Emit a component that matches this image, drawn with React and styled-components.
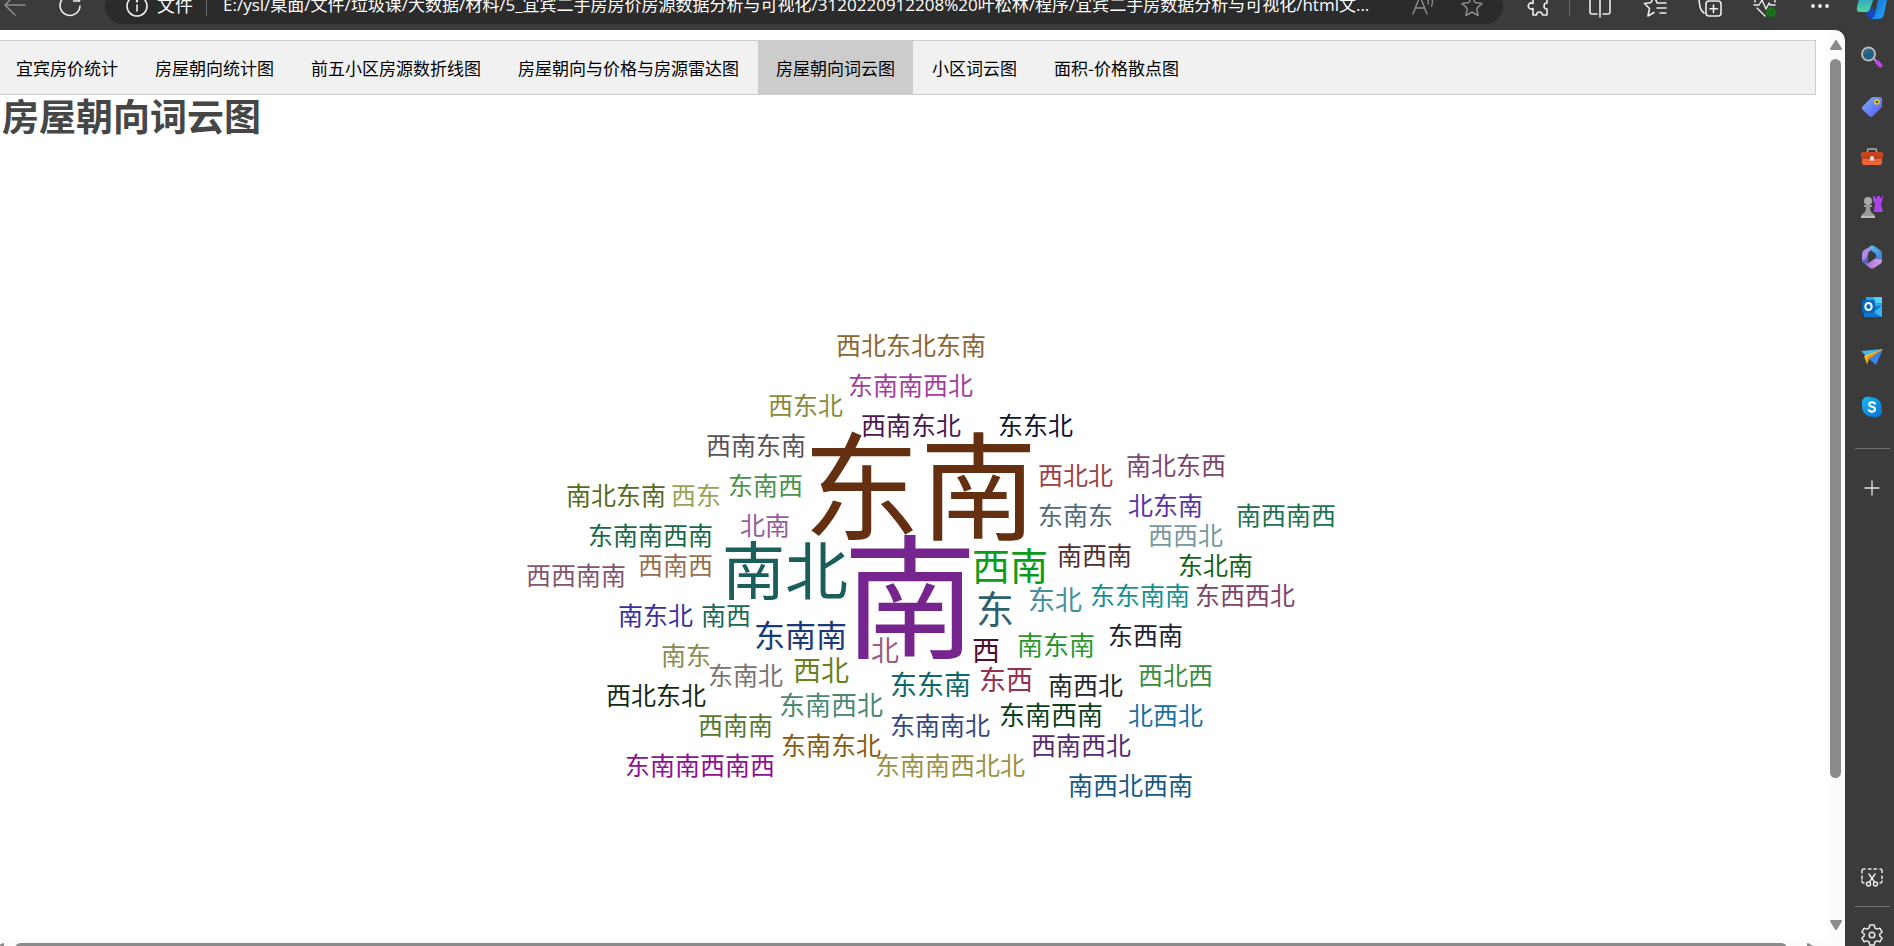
import React from "react";
import styled, { createGlobalStyle, css } from "styled-components";

const sans = '"Open Sans", "Noto Sans CJK SC", sans-serif';
const cjk = '"Noto Sans CJK SC", sans-serif';

const GlobalStyle = createGlobalStyle`
  *, *::before, *::after { box-sizing: border-box; }
  body { margin: 0; overflow: hidden; background: #3b3b3b; font-family: ${cjk}; }
`;

const Shell = styled.div`
  display: grid;
  grid-template-columns: minmax(0, 1fr) 49px;
  height: 100vh;
  overflow: hidden;
`;

const Main = styled.div`
  display: flex;
  flex-direction: column;
  min-width: 0;
  min-height: 0;
`;

const Toolbar = styled.header`
  display: flex;
  align-items: center;
  flex: none;
  height: 48px;
  margin-top: -18px;
  padding-right: 10px;
`;

const ToolGroup = styled.div`
  display: flex;
  align-items: center;
  gap: ${(p) => p.$gap || 25}px;
`;

const IconButton = styled.button`
  display: flex;
  align-items: center;
  justify-content: center;
  flex: none;
  width: 30px;
  height: 30px;
  padding: 0;
  border: 0;
  background: none;
  color: ${(p) => (p.$dim ? "#8c8c8c" : "#ededed")};
`;

const ToolDivider = styled.span`
  width: 1px;
  height: 20px;
  background: #6a6a6a;
`;

const AddressBar = styled.div`
  display: flex;
  align-items: center;
  flex: 1;
  min-width: 0;
  height: 36px;
  margin: 0 21px 0 20px;
  padding: 0 16px 0 17px;
  border-radius: 18px;
  background: #2b2b2b;
  color: #fff;
`;

const Scheme = styled.label`
  flex: none;
  margin: 0 13px 2px 5px;
  font: 18px/30px ${sans};
`;

const Url = styled.input`
  flex: 1;
  min-width: 0;
  height: 30px;
  margin: 0 0 2px 16px;
  padding: 0;
  border: 0;
  outline: 0;
  background: none;
  color: #fff;
  font: 17px/30px ${sans};
`;

const Viewport = styled.div`
  display: grid;
  grid-template-columns: minmax(0, 1fr) 17px;
  grid-template-rows: minmax(0, 1fr) 7px;
  flex: 1;
  min-height: 0;
  overflow: hidden;
  border-radius: 0 10px 0 0;
  background: #fcfcfc;
`;

const Page = styled.main`
  overflow: hidden;
  padding: 10px 12px 0 0;
  background: #fff;
`;

const Nav = styled.nav`
  margin-left: -3px;
  border: 1px solid #ccc;
  background: #f1f1f1;
`;

const TabList = styled.ul`
  display: flex;
  gap: 1px;
  margin: 0;
  padding: 0;
  list-style: none;
`;

const Tab = styled.a`
  display: block;
  padding: 14px 18px;
  color: #000;
  font: 17px/25px ${cjk};
  text-decoration: none;
  white-space: nowrap;
  ${(p) => p.$active && css`background: #ccc;`}
`;

const Title = styled.h1`
  margin: 0;
  padding-left: 2px;
  color: #464646;
  font: bold 37px/40px ${cjk};
`;

const Chart = styled.div`
  display: flex;
  justify-content: center;
  padding: 194px 0 0 44px;
`;

const Cloud = styled.svg`
  flex: none;
  overflow: visible;
`;

const Word = styled.text`
  font-family: ${cjk};
  font-size: ${(p) => p.$size}px;
  fill: ${(p) => p.$color};
`;

const VScroll = styled.div`
  display: flex;
  flex-direction: column;
  align-items: center;
  gap: 9px;
  padding: 9px 2px 9px 0;
`;

const VThumb = styled.div`
  flex: 727;
  width: 11px;
  border-radius: 6px;
  background: #8b8b8b;
`;

const VRest = styled.div`
  flex: 125;
`;

const HScroll = styled.div`
  display: flex;
  overflow: hidden;
  height: 7px;
  padding: 4px 8px 0 0;
`;

const HThumb = styled.div`
  flex: 1;
  height: 11px;
  margin: 0 20px 0 11px;
  border-radius: 6px;
  background: #8b8b8b;
`;

const Arrow = styled.svg`
  flex: none;
  fill: #8b8b8b;
  stroke: #8b8b8b;
  stroke-width: 2;
  stroke-linejoin: round;
`;

const Sidebar = styled.aside`
  display: flex;
  flex-direction: column;
  align-items: center;
  padding-left: 5px;
`;

const SideButton = styled.button`
  display: flex;
  align-items: center;
  justify-content: center;
  flex: none;
  width: 44px;
  height: ${(p) => p.$height || 50}px;
  padding: 0;
  border: 0;
  background: none;
  color: #e8e8e8;
`;

const CopilotButton = styled(SideButton)`
  height: 54px;
  margin-top: -22px;
`;

const SideDivider = styled.hr`
  flex: none;
  width: 35px;
  height: 1px;
  margin: ${(p) => (p.$wide ? "16px 0 14px" : "0")};
  border: 0;
  background: #707070;
`;

const Spacer = styled.div`
  flex: 1;
`;

const SideBottom = styled.div`
  display: flex;
  flex-direction: column;
  align-items: center;
  flex: none;
  margin-bottom: -17px;
`;

const tabs = [
  "宜宾房价统计",
  "房屋朝向统计图",
  "前五小区房源数折线图",
  "房屋朝向与价格与房源雷达图",
  "房屋朝向词云图",
  "小区词云图",
  "面积-价格散点图",
];

/* text, left edge, vertical middle, size, colour */
const words = [
  ["西北东北东南", 837, 346, 25, "#8c6532"],
  ["东南南西北", 849, 386, 25, "#a33e9d"],
  ["西东北", 769, 406, 25, "#8a8a3a"],
  ["西南东北", 862, 426, 25, "#4b1653"],
  ["东东北", 999, 426, 25, "#0d1430"],
  ["西南东南", 707, 446, 25, "#5b5357"],
  ["东南", 808, 488, 117, "#653011"],
  ["西北北", 1039, 476, 25, "#9b4144"],
  ["南北东西", 1127, 466, 25, "#7b466e"],
  ["东南西", 729, 486, 25, "#49934a"],
  ["南北东南", 567, 496, 25, "#556b22"],
  ["西东", 672, 496, 25, "#98a35a"],
  ["东南东", 1039, 516, 25, "#4e6b7b"],
  ["北东南", 1129, 506, 25, "#5a33a5"],
  ["南西南西", 1237, 516, 25, "#1c7351"],
  ["东南南西南", 589, 536, 25, "#17694a"],
  ["北南", 741, 526, 25, "#965c9a"],
  ["西西北", 1149, 536, 25, "#7b979e"],
  ["南西南", 1058, 556, 25, "#4f2f34"],
  ["东北南", 1179, 566, 25, "#116317"],
  ["西西南南", 527, 576, 25, "#83566f"],
  ["西南西", 639, 566, 25, "#97704f"],
  ["南北", 725, 571, 63, "#1b5f5d"],
  ["南", 848, 598, 134, "#76258f"],
  ["西南", 974, 567, 38, "#0a9c18"],
  ["东", 978, 610, 38, "#2f6070"],
  ["东北", 1029, 601, 27, "#4590a0"],
  ["东东南南", 1091, 596, 25, "#159090"],
  ["东西西北", 1196, 596, 25, "#804468"],
  ["南东北", 619, 616, 25, "#3c2f9f"],
  ["南西", 702, 616, 25, "#1a6a58"],
  ["东南南", 755, 636, 31, "#1c3a7a"],
  ["东西南", 1109, 636, 25, "#20222f"],
  ["南东", 662, 656, 25, "#8c8a52"],
  ["东南北", 709, 676, 25, "#787470"],
  ["西北", 794, 671, 28, "#6b8021"],
  ["北", 872, 651, 28, "#9b5f80"],
  ["西", 973, 651, 28, "#4a0d2b"],
  ["南东南", 1018, 646, 26, "#2b962c"],
  ["东东南", 891, 686, 27, "#10686c"],
  ["东西", 980, 681, 27, "#962f50"],
  ["南西北", 1049, 686, 25, "#23272a"],
  ["西北西", 1139, 676, 25, "#3e8a40"],
  ["西北东北", 607, 696, 25, "#122a14"],
  ["东南西北", 780, 706, 26, "#4a8872"],
  ["东南西南", 1000, 716, 26, "#0c3f1c"],
  ["西南南", 699, 726, 25, "#55792f"],
  ["东南南北", 891, 726, 25, "#33487f"],
  ["北西北", 1129, 716, 25, "#1b6f9f"],
  ["东南东北", 782, 746, 25, "#8a5a10"],
  ["西南西北", 1032, 746, 25, "#572a73"],
  ["东南南西南西", 626, 766, 25, "#8f1093"],
  ["东南南西北北", 876, 766, 25, "#9c9143"],
  ["南西北西南", 1069, 786, 25, "#155a84"],
];

const Line = ({ size = 24, w = 1.6, children }) => (
  <svg width={size} height={size} viewBox="0 0 24 24" fill="none" stroke="currentColor"
    strokeWidth={w} strokeLinecap="round" strokeLinejoin="round" aria-hidden="true">
    {children}
  </svg>
);

const BackIcon = () => (
  <Line><path d="M22 11H2M12 1L2 11l10 10" /></Line>
);
const RefreshIcon = () => (
  <Line><path d="M21 7a10 10 0 1 0 1 5M21.5 1v6h-6" /></Line>
);
const InfoIcon = () => (
  <Line><circle cx="12" cy="12" r="10" /><path d="M12 11v6" /><path d="M12 7v.2" strokeWidth="2.4" /></Line>
);
const ReadAloudIcon = () => (
  <Line w={1.4}><path d="M3 20L10 2l7 18M5.500 14h9M17 4q2 3 1 6M20 1q4 5 1.500 11" /></Line>
);
const StarIcon = () => (
  <Line w={1.5}><path d="M12 2l3 6.500 7 .900-5.200 4.900 1.300 7.200L12 18l-6.100 3.500 1.300-7.200L2 9.400l7-.9z" /></Line>
);
const PuzzleIcon = () => (
  <Line><path d="M6 4h4a3 3 0 0 1 6 0h4v5a3 3 0 1 0 0 6v6h-4.500a3 3 0 0 0-6 0H6v-6.500a3 3 0 1 1 0-5z" /></Line>
);
const SplitIcon = () => (
  <Line><path d="M12 1v22M9 3H4a2 2 0 0 0-2 2v13a2 2 0 0 0 2 2h5M15 3h5a2 2 0 0 1 2 2v13a2 2 0 0 1-2 2h-5" /></Line>
);
const FavoritesIcon = () => (
  <Line><path d="M11 18.500l-6 3.500 1.500-7.500L1.500 9.500l6.500-1L11 2l3 6.500M14 9h9M14 14h9M17 19h6" /></Line>
);
const CollectionsIcon = () => (
  <Line><rect x="8" y="7" width="15" height="15" rx="3" /><path d="M15.500 11v7.500M12 14.700h7.500M6 19Q3 17 2 13L1 6q0-3 3-3l11-1q3 0 3 2" /></Line>
);
const HealthIcon = () => (
  <Line w={1.4}>
    <path d="M2 8q0-6 5-6 3 0 5 3 2-3 5-3 5 0 5 6M4 14l8 8M1 11h5l3-5 4 9 3-6 1 2h5" />
    <circle cx="18" cy="18.500" r="5" fill="#137a13" stroke="none" />
    <path d="M15.500 18.500l2 2 3-4" stroke="#3b3b3b" strokeWidth="1" />
  </Line>
);
const MoreIcon = () => (
  <Line><g fill="currentColor" stroke="none"><circle cx="5" cy="12" r="1.900" /><circle cx="12" cy="12" r="1.900" /><circle cx="19" cy="12" r="1.900" /></g></Line>
);

const CopilotIcon = () => (
  <svg width="32" height="32" viewBox="0 0 32 32" aria-hidden="true">
    <defs>
      <linearGradient id="cpA" x1="0" y1="0" x2="0" y2="1"><stop offset="0" stopColor="#1b8fe0" /><stop offset="1" stopColor="#4fd69a" /></linearGradient>
      <linearGradient id="cpB" x1="0" y1="0" x2="1" y2="1"><stop offset="0" stopColor="#1765c8" /><stop offset="1" stopColor="#1fa8ff" /></linearGradient>
    </defs>
    <path d="M9 21l3 7q1 2 4 2h6l-5-11z" fill="#1747c4" />
    <path d="M7 3h13l-6 17q-1 3-4 3H4q-4 0-3-5L4 6q1-3 3-3z" fill="url(#cpA)" />
    <path d="M22 5h5q4 0 4 6l-3 14q-1 5-6 5h-7q3-1 4-5l3-14z" fill="url(#cpB)" />
    <path d="M19 3h5l-2 6h-6z" fill="#1555bb" />
  </svg>
);

const SearchIcon = () => (
  <svg width="24" height="24" viewBox="0 0 24 24" aria-hidden="true">
    <path d="M14 14l3 3" stroke="#aaa" strokeWidth="2" />
    <path d="M17 17l3.500 3.500" stroke="#c63df2" strokeWidth="4" strokeLinecap="round" />
    <circle cx="8.500" cy="9" r="6.500" fill="#205f80" stroke="#b9b9b9" strokeWidth="2" />
    <path d="M5 8q1-3 4-3" stroke="#39789a" strokeWidth="1.500" fill="none" />
  </svg>
);
const TagIcon = () => (
  <svg width="24" height="24" viewBox="0 0 24 24" aria-hidden="true">
    <defs><linearGradient id="tag" x1="0" y1="0" x2="1" y2="1"><stop offset="0" stopColor="#7db4ff" /><stop offset="1" stopColor="#5752ef" /></linearGradient></defs>
    <path d="M13 2h7q2 0 2 2v7q0 1-1 2l-8 8q-2 2-4 0l-6-6q-2-2 0-4l8-8q1-1 2-1z" fill="url(#tag)" />
    <circle cx="17" cy="7" r="2.800" fill="#f4cf16" /><circle cx="17" cy="7" r="1.300" fill="#4a4b37" />
  </svg>
);
const BriefcaseIcon = () => (
  <svg width="24" height="24" viewBox="0 0 24 24" aria-hidden="true">
    <path d="M7.500 8V5q0-1 1-1h7q1 0 1 1v3" fill="none" stroke="#b1b1b1" strokeWidth="1.500" />
    <path d="M2 11h20v7q0 2-2 2H4q-2 0-2-2z" fill="#ed6436" />
    <path d="M1 9q0-2 2-2h18q2 0 2 2v4H1z" fill="#c9431d" />
    <path d="M1 13h22" stroke="#8f2c14" />
    <rect x="10" y="11" width="4" height="5" rx="2" fill="#ddd" />
  </svg>
);
const ChessIcon = () => (
  <svg width="24" height="24" viewBox="0 0 24 24" aria-hidden="true">
    <path d="M13 1h2v2h2V1h3v2h2V1h1l-1 6-1 1 1 6 1 3h-9l1-9-2-2z" fill="#ad43f0" />
    <circle cx="8" cy="6" r="4" fill="#aaa" />
    <path d="M4 10h8v2h-2q0 4 2 6 3 1 3 5H1q0-4 3-5 2-2 2-6H4z" fill="#999" />
    <path d="M1 21h14v2H1z" fill="#bbb" />
  </svg>
);
const M365Icon = () => (
  <svg width="24" height="24" viewBox="0 0 24 24" aria-hidden="true">
    <defs>
      <linearGradient id="m3" x1="0" y1="0" x2="1" y2="0"><stop offset="0" stopColor="#9a6fd8" /><stop offset="1" stopColor="#dba0e8" /></linearGradient>
      <linearGradient id="m3b" x1="0" y1="0" x2="1" y2="1"><stop offset="0" stopColor="#58c4f4" /><stop offset="1" stopColor="#3a78d8" /></linearGradient>
    </defs>
    <path d="M11 1L4 5Q2 6 2 9v6q0 2 2 3l4 2V9q0-2 2-3l3-2z" fill="#a98be0" />
    <path d="M8 9v11l-4-2q-2-1-2-3 4 1 6-6z" fill="#5a60c8" />
    <path d="M10 1q2-1 4 0l6 4q2 1 2 4v7l-6-4V9l-4-3q-2-2-2-5z" fill="url(#m3b)" />
    <path d="M22 15q0 3-2 4l-6 4q-2 1-4 0l-5-4q3 0 5-2l6-4z" fill="url(#m3)" />
  </svg>
);
const OutlookIcon = () => (
  <svg width="24" height="24" viewBox="0 0 24 24" aria-hidden="true">
    <path d="M6 2h15q1 0 1 1v10H6z" fill="#2aa5e8" /><path d="M14 2h8v6h-8z" fill="#50d0fa" />
    <path d="M4 11h18v10q0 1-1 1H5q-1 0-1-1z" fill="#1378cc" /><path d="M22 11v11l-9-5z" fill="#35b5f1" />
    <rect x="2" y="5" width="13" height="13" rx="1" fill="#0868bc" />
    <ellipse cx="8.500" cy="11.500" rx="3.200" ry="3.600" fill="none" stroke="#fff" strokeWidth="2" />
  </svg>
);
const PlaneIcon = () => (
  <svg width="24" height="24" viewBox="0 0 24 24" aria-hidden="true">
    <path d="M1 6l22-2L7 12z" fill="#46b7ee" /><path d="M23 4l-7 16-7-6z" fill="#3a82ef" />
    <path d="M4 11L23 4 9 14l-2 5z" fill="#fdbc20" /><path d="M7 12l16-8-14 10-2 5z" fill="#dc9312" />
  </svg>
);
const SkypeIcon = () => (
  <svg width="24" height="24" viewBox="0 0 24 24" aria-hidden="true">
    <defs><linearGradient id="sk" x1="0" y1="0" x2="1" y2="1"><stop offset="0" stopColor="#19b8f5" /><stop offset="1" stopColor="#096fce" /></linearGradient></defs>
    <path d="M8 1.500q2 0 3.500 .8a9.700 9.700 0 0 1 10 11.200 6.500 6.500 0 0 1-9 8.200A9.700 9.700 0 0 1 2.300 10.500 6.500 6.500 0 0 1 8 1.500z" fill="url(#sk)" />
    <path d="M15 8.700q-1-1.400-3-1.400-2.800 0-2.800 2.200 0 1.700 2.800 2.300 3 .6 3 2.500 0 2.400-3 2.400-2.200 0-3.200-1.600" fill="none" stroke="#fff" strokeWidth="2" strokeLinecap="round" />
  </svg>
);
const PlusIcon = () => (
  <Line w={1.3}><path d="M12 5v14M5 12h14" /></Line>
);
const SnipIcon = () => (
  <Line w={1.5}>
    <path d="M2 7V5q0-2 2-2h1M8.500 3H11M14 3h2.500M20 3q2 0 2 2v1.500M22 10v2.500M2 10v3M2 15q0 2 2 2M22 15q0 2-2 2M9 8l5.500 8M15 8l-5.500 8" />
    <circle cx="8.500" cy="18" r="2" /><circle cx="15.500" cy="18" r="2" />
  </Line>
);
const GearIcon = () => (
  <Line w={1.5}>
    <path d="M9.800 2h4.400l.7 3 2 1.100 3-.9 2.200 3.800-2.300 2v2l2.300 2-2.200 3.800-3-.9-2 1.100-.7 3H9.800l-.7-3-2-1.100-3 .9L1.900 15l2.300-2v-2L1.900 9l2.200-3.800 3 .9 2-1.100z" />
    <circle cx="12" cy="12" r="2.800" />
  </Line>
);

const sideApps = [
  ["搜索", SearchIcon],
  ["购物", TagIcon],
  ["工具", BriefcaseIcon],
  ["游戏", ChessIcon],
  ["Microsoft 365", M365Icon],
  ["Outlook", OutlookIcon],
  ["Drop", PlaneIcon],
  ["Skype", SkypeIcon],
];

const tools = [
  ["分屏", SplitIcon],
  ["收藏夹", FavoritesIcon],
  ["集锦", CollectionsIcon],
  ["浏览器概要", HealthIcon],
  ["更多", MoreIcon],
];

function BrowserToolbar() {
  return (
    <Toolbar>
      <ToolGroup>
        <IconButton $dim aria-label="返回"><BackIcon /></IconButton>
        <IconButton aria-label="刷新"><RefreshIcon /></IconButton>
      </ToolGroup>
      <AddressBar>
        <IconButton aria-label="网站信息"><InfoIcon /></IconButton>
        <Scheme htmlFor="url">文件</Scheme>
        <ToolDivider />
        <Url
          id="url"
          readOnly
          value="E:/ysl/桌面/文件/垃圾课/大数据/材料/5_宜宾二手房房价房源数据分析与可视化/3120220912208%20叶松林/程序/宜宾二手房数据分析与可视化/html文..."
        />
        <ToolGroup $gap={20}>
          <IconButton $dim aria-label="大声朗读"><ReadAloudIcon /></IconButton>
          <IconButton $dim aria-label="收藏"><StarIcon /></IconButton>
        </ToolGroup>
      </AddressBar>
      <ToolGroup $gap={15}>
        <IconButton aria-label="扩展"><PuzzleIcon /></IconButton>
        <ToolDivider />
        <ToolGroup>
          {tools.map(([label, Icon]) => (
            <IconButton key={label} aria-label={label}><Icon /></IconButton>
          ))}
        </ToolGroup>
      </ToolGroup>
    </Toolbar>
  );
}

function WordCloud() {
  return (
    <Chart>
      <Cloud width="820" height="470" viewBox="520 330 820 470" role="img" aria-label="房屋朝向词云图">
        {words.map(([text, x, y, size, color]) => (
          <Word
            key={text}
            x={Math.round(x - size * 0.04)}
            y={Math.round(y + size * 0.38)}
            $size={size}
            $color={color}
          >
            {text}
          </Word>
        ))}
      </Cloud>
    </Chart>
  );
}

export default function App() {
  return (
    <>
      <GlobalStyle />
      <Shell>
        <Main>
          <BrowserToolbar />
          <Viewport>
            <Page>
              <Nav>
                <TabList>
                  {tabs.map((tab) => (
                    <li key={tab}>
                      <Tab href="#" $active={tab === "房屋朝向词云图"}>{tab}</Tab>
                    </li>
                  ))}
                </TabList>
              </Nav>
              <Title>房屋朝向词云图</Title>
              <WordCloud />
            </Page>
            <VScroll aria-hidden="true">
              <Arrow width="12" height="11" viewBox="0 0 12 11"><path d="M6 2l5 8H1z" /></Arrow>
              <VThumb />
              <VRest />
              <Arrow width="12" height="10" viewBox="0 0 12 10"><path d="M6 9L1 1h10z" /></Arrow>
            </VScroll>
            <HScroll aria-hidden="true">
              <Arrow width="4" height="12" viewBox="7 0 4 12"><path d="M2 6l8-5v10z" /></Arrow>
              <HThumb />
              <Arrow width="13" height="12" viewBox="0 0 13 12"><path d="M9 6L1 1v10z" /></Arrow>
            </HScroll>
          </Viewport>
        </Main>
        <Sidebar>
          <CopilotButton aria-label="Copilot"><CopilotIcon /></CopilotButton>
          {sideApps.map(([label, Icon]) => (
            <SideButton key={label} aria-label={label}><Icon /></SideButton>
          ))}
          <SideDivider $wide />
          <SideButton aria-label="添加"><PlusIcon /></SideButton>
          <Spacer />
          <SideBottom>
            <SideButton $height={56} aria-label="屏幕截图"><SnipIcon /></SideButton>
            <SideDivider />
            <SideButton $height={56} aria-label="设置"><GearIcon /></SideButton>
          </SideBottom>
        </Sidebar>
      </Shell>
    </>
  );
}
